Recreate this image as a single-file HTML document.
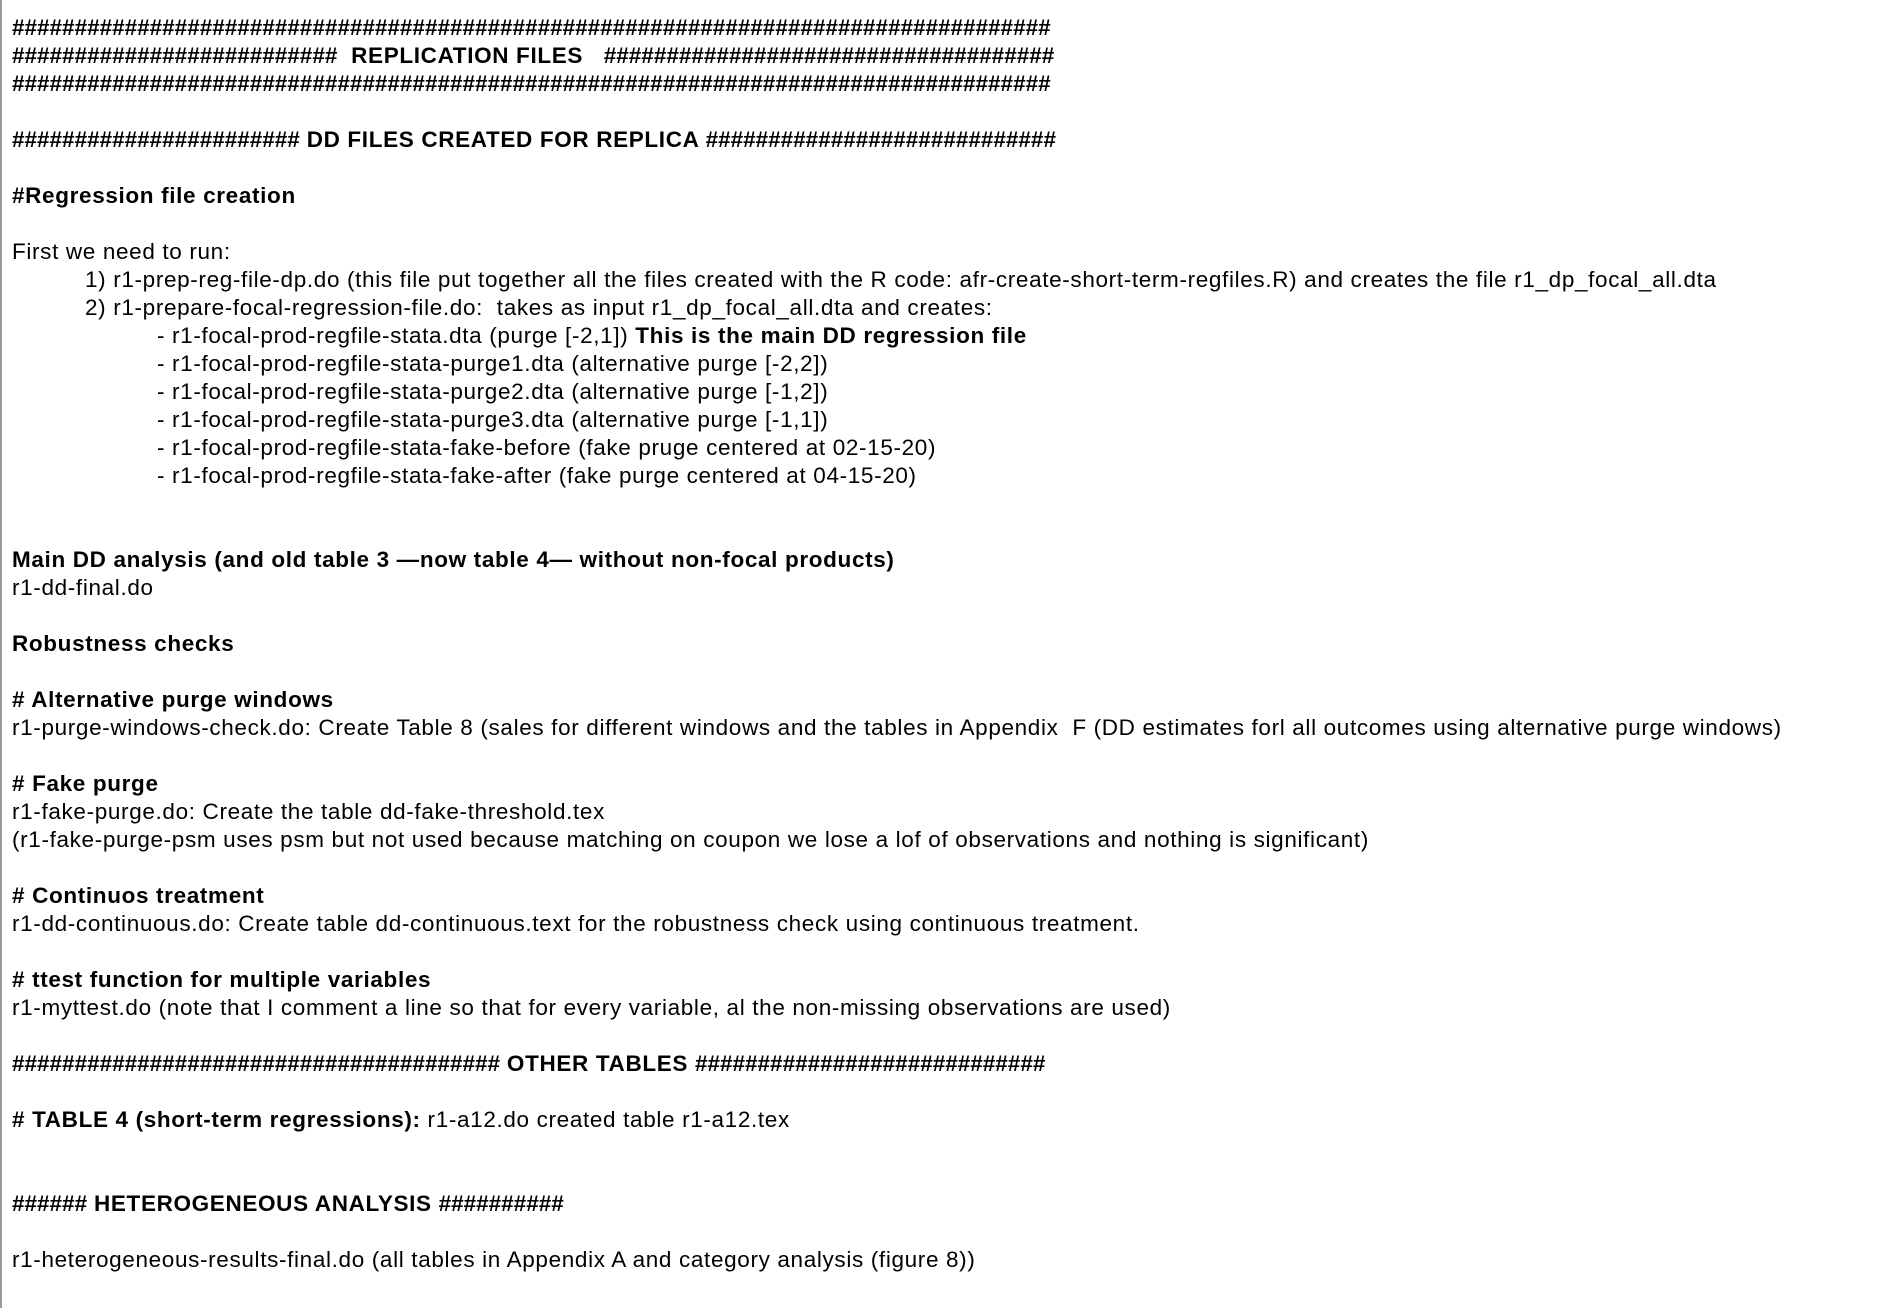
<!DOCTYPE html>
<html><head><meta charset="utf-8"><style>
html,body{margin:0;padding:0;background:#fff;}
body{width:1902px;height:1308px;overflow:hidden;position:relative;font-family:"Liberation Sans",Arial,sans-serif;font-size:22.5px;color:#000;}
.bar{position:absolute;left:0;top:0;width:2px;height:1308px;background:#9a9a9a;}
.c{position:absolute;left:12px;top:14px;right:0;}
.l{height:28px;line-height:28px;white-space:pre;letter-spacing:0.65px;}
.h{letter-spacing:0;}
b{font-weight:bold;}
.i1{padding-left:73px;}
.i2{padding-left:145px;}
</style></head><body>
<div class="bar"></div>
<div class="c">
<div class="l"><b class="h">###################################################################################</b></div>
<div class="l"><b><span class="h">##########################</span>  REPLICATION FILES   <span class="h">####################################</span></b></div>
<div class="l"><b class="h">###################################################################################</b></div>
<div class="l"> </div>
<div class="l"><b><span class="h">#######################</span> DD FILES CREATED FOR REPLICA <span class="h">############################</span></b></div>
<div class="l"> </div>
<div class="l"><b>#Regression file creation</b></div>
<div class="l"> </div>
<div class="l">First we need to run:</div>
<div class="l i1">1) r1-prep-reg-file-dp.do (this file put together all the files created with the R code: afr-create-short-term-regfiles.R) and creates the file r1_dp_focal_all.dta</div>
<div class="l i1">2) r1-prepare-focal-regression-file.do:  takes as input r1_dp_focal_all.dta and creates:</div>
<div class="l i2">- r1-focal-prod-regfile-stata.dta (purge [-2,1]) <b>This is the main DD regression file</b></div>
<div class="l i2">- r1-focal-prod-regfile-stata-purge1.dta (alternative purge [-2,2])</div>
<div class="l i2">- r1-focal-prod-regfile-stata-purge2.dta (alternative purge [-1,2])</div>
<div class="l i2">- r1-focal-prod-regfile-stata-purge3.dta (alternative purge [-1,1])</div>
<div class="l i2">- r1-focal-prod-regfile-stata-fake-before (fake pruge centered at 02-15-20)</div>
<div class="l i2">- r1-focal-prod-regfile-stata-fake-after (fake purge centered at 04-15-20)</div>
<div class="l"> </div>
<div class="l"> </div>
<div class="l"><b>Main DD analysis (and old table 3 —now table 4— without non-focal products)</b></div>
<div class="l">r1-dd-final.do</div>
<div class="l"> </div>
<div class="l"><b>Robustness checks</b></div>
<div class="l"> </div>
<div class="l"><b># Alternative purge windows</b></div>
<div class="l">r1-purge-windows-check.do: Create Table 8 (sales for different windows and the tables in Appendix  F (DD estimates forl all outcomes using alternative purge windows)</div>
<div class="l"> </div>
<div class="l"><b># Fake purge</b></div>
<div class="l">r1-fake-purge.do: Create the table dd-fake-threshold.tex</div>
<div class="l">(r1-fake-purge-psm uses psm but not used because matching on coupon we lose a lof of observations and nothing is significant)</div>
<div class="l"> </div>
<div class="l"><b># Continuos treatment</b></div>
<div class="l">r1-dd-continuous.do: Create table dd-continuous.text for the robustness check using continuous treatment.</div>
<div class="l"> </div>
<div class="l"><b># ttest function for multiple variables</b></div>
<div class="l">r1-myttest.do (note that I comment a line so that for every variable, al the non-missing observations are used)</div>
<div class="l"> </div>
<div class="l"><b><span class="h">#######################################</span> OTHER TABLES <span class="h">############################</span></b></div>
<div class="l"> </div>
<div class="l"><b># TABLE 4 (short-term regressions):</b> r1-a12.do created table r1-a12.tex</div>
<div class="l"> </div>
<div class="l"> </div>
<div class="l"><b><span class="h">######</span> HETEROGENEOUS ANALYSIS <span class="h">##########</span></b></div>
<div class="l"> </div>
<div class="l">r1-heterogeneous-results-final.do (all tables in Appendix A and category analysis (figure 8))</div>
</div>
</body></html>
